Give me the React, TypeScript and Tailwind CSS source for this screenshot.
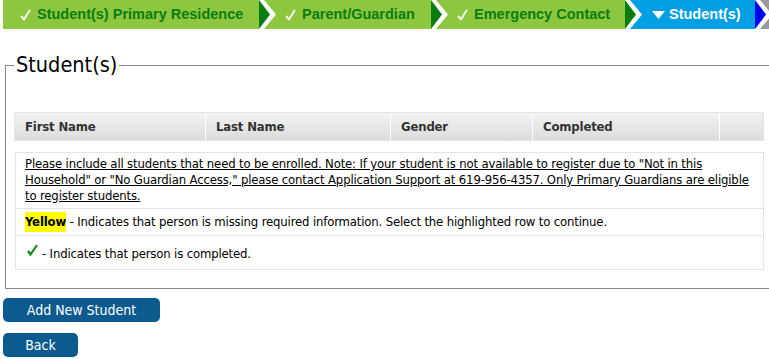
import React from 'react';

const BODY_FONT = "font-['DejaVu_Sans_Condensed','DejaVu_Sans',sans-serif]";

// one chevron separator between two wizard steps
function Chevron({ dark, next }: { dark: string; next: string }) {
  return (
    <svg width="17" height="29" viewBox="0 0 17 29" className="shrink-0 block">
      <rect x="0" y="0" width="17" height="29" fill={next} />
      <polygon points="0,0 5,0 17,14.5 5,29 0,29" fill="#ffffff" />
      <polygon points="0,0 11,14.5 0,29" fill={dark} />
    </svg>
  );
}

function Check() {
  return (
    <svg width="11" height="12" viewBox="0 0 11 12" className="shrink-0">
      <path d="M1.5 7.5 L4 10.5 L9.5 1.5" stroke="#f4f8ec" strokeWidth="2" fill="none" strokeLinecap="round" strokeLinejoin="round" />
    </svg>
  );
}

const steps = [
  { label: 'Student(s) Primary Residence', width: 'w-[256px]', pad: 'pl-[17px]' },
  { label: 'Parent/Guardian', width: 'w-[155px]', pad: 'pl-[9px]' },
  { label: 'Emergency Contact', width: 'w-[177px]', pad: 'pl-[9px]' },
];

export default function App() {
  return (
    <div className="w-[769px] h-[359px] overflow-hidden bg-white">
      {/* Wizard steps */}
      <div className="flex h-[29px] pl-[3px] font-['Liberation_Sans',Arial,sans-serif] font-bold text-[14.5px]">
        {steps.map((s, i) => (
          <React.Fragment key={s.label}>
            <div className={`${s.width} ${s.pad} shrink-0 h-full bg-[#8dc63f] flex items-center text-[#0a7d10]`}>
              <Check />
              <span className="ml-[6px] whitespace-nowrap">{s.label}</span>
            </div>
            <Chevron dark="#0a7d10" next={i === 2 ? '#009fe3' : '#8dc63f'} />
          </React.Fragment>
        ))}
        <div className="w-[113px] pl-[10px] shrink-0 h-full bg-[#009fe3] flex items-center text-white">
          <svg width="13" height="8" viewBox="0 0 13 8" className="shrink-0">
            <polygon points="0,0 13,0 6.5,8" fill="#ffffff" />
          </svg>
          <span className="ml-[4px] whitespace-nowrap">Student(s)</span>
        </div>
        <Chevron dark="#0000f0" next="#9a9a9a" />
        <div className="w-[20px] shrink-0 h-full bg-[#9a9a9a]" />
      </div>

      <div className={`${BODY_FONT} text-black tracking-[-0.16px]`}>
        {/* Student(s) fieldset */}
        <fieldset className="mt-[24px] ml-[5px] w-[768px] min-w-0 border border-[#888888] px-[8px] pb-[18px]">
          <legend className="px-[2px] text-[21.5px] leading-[24px] tracking-normal text-black">Student(s)</legend>

          <div className="mt-[35px] flex h-[29px] border border-[#e4e4e4] bg-gradient-to-b from-[#f3f3f3] to-[#dcdcdc] text-[13px] font-bold text-[#333333]">
            <div className="w-[191px] border-r border-white pl-[10px] flex items-center">First Name</div>
            <div className="w-[185px] border-r border-white pl-[10px] flex items-center">Last Name</div>
            <div className="w-[142px] border-r border-white pl-[10px] flex items-center">Gender</div>
            <div className="w-[187px] border-r border-white pl-[10px] flex items-center">Completed</div>
            <div className="flex-1" />
          </div>

          <div className="mt-[11px] ml-[1px] border border-[#e4e4e4] text-[13px]">
            <div className="px-[9px] pt-[3px] pb-[4px] leading-[16px] underline whitespace-nowrap">
              Please include all students that need to be enrolled. Note: If your student is not available to register due to "Not in this
              <br />
              Household" or "No Guardian Access," please contact Application Support at 619-956-4357. Only Primary Guardians are eligible
              <br />
              to register students.
            </div>
            <div className="border-t border-[#e4e4e4] px-[9px] h-[27px] flex items-center">
              <span className="bg-[#ffff00] font-bold">Yellow</span>
              <span>&nbsp;- Indicates that person is missing required information. Select the highlighted row to continue.</span>
            </div>
            <div className="border-t border-[#e4e4e4] px-[11px] h-[34px] flex items-center">
              <svg width="11" height="12" viewBox="0 0 11 12" className="shrink-0 -mt-[6px]">
                <path d="M1 7 L3.5 10.5 L10 1" stroke="#118a1a" strokeWidth="2.2" fill="none" />
              </svg>
              <span className="ml-[4px] mt-[3px]">- Indicates that person is completed.</span>
            </div>
          </div>
        </fieldset>

        {/* Actions */}
        <div className="mt-[9px] ml-[3px] flex flex-col items-start gap-[11px] text-[14px] tracking-normal text-white">
          <button className="h-[24px] w-[157px] rounded-[5px] bg-[#0d5a8e]">Add New Student</button>
          <button className="h-[24px] w-[75px] rounded-[5px] bg-[#0d5a8e]">Back</button>
        </div>
      </div>
    </div>
  );
}
